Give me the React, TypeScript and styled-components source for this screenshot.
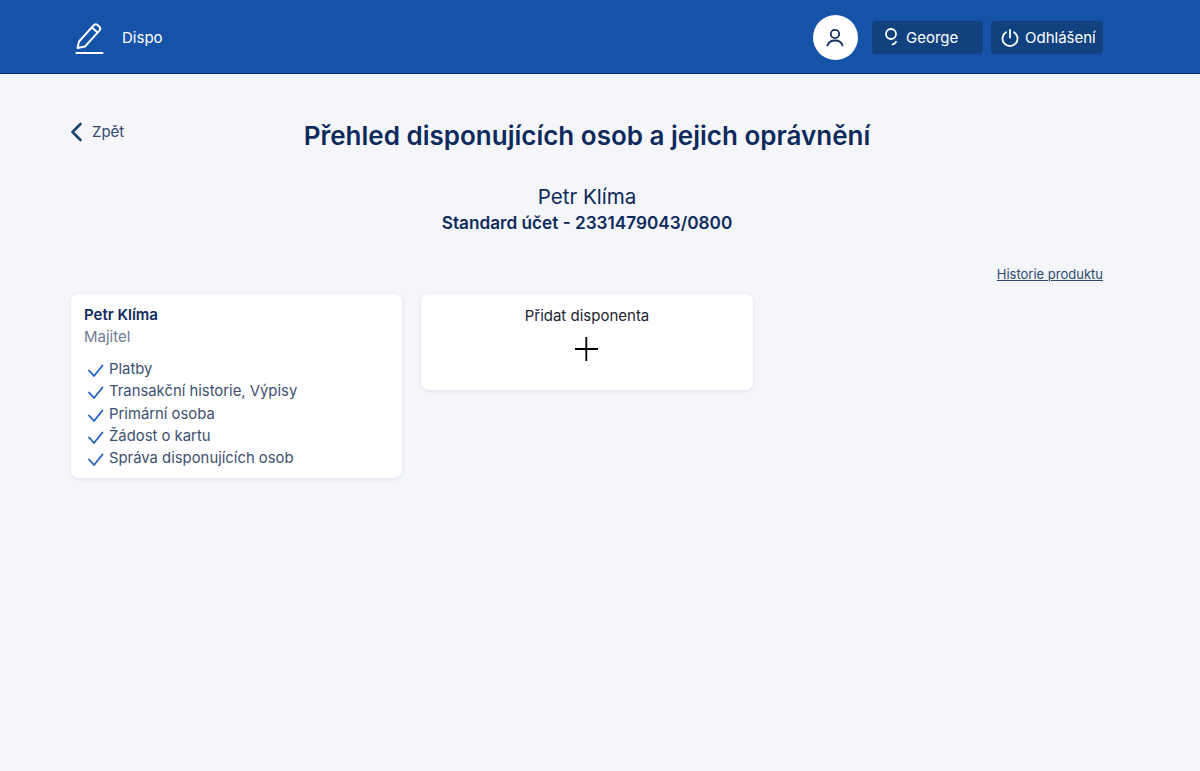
import React from "react";
import styled, { createGlobalStyle } from "styled-components";

const Global = createGlobalStyle`
  html, body { margin: 0; padding: 0; background: #f4f6fa; }
  body { font-family: Inter, "Liberation Sans", sans-serif; color: #0e2a5c; }
  * { box-sizing: border-box; }
`;

const Page = styled.div`
  min-height: 771px;
  background: #f4f6fa;
  display: flex;
  flex-direction: column;
`;

const Header = styled.header`
  height: 74px;
  background: #1553a8;
  border-bottom: 1px solid #0b2a63;
  display: flex;
  align-items: center;
  justify-content: space-between;
  padding: 2px 97px 0 74px;
`;

const Brand = styled.div`
  display: flex;
  align-items: center;
  gap: 15px;
  color: #fff;
  font-size: 15px;
`;

const HeaderActions = styled.div`
  display: flex;
  align-items: center;
  gap: 8px;
`;

const Avatar = styled.div`
  width: 45px;
  height: 45px;
  border-radius: 50%;
  background: #fff;
  display: flex;
  align-items: center;
  justify-content: center;
  margin-right: 6px;
`;

const HeaderButton = styled.div<{ $width: number; $gap: number; $pad: number }>`
  width: ${(p) => p.$width}px;
  height: 33px;
  padding-left: ${(p) => p.$pad}px;
  border-radius: 4px;
  background: #11427f;
  color: #fff;
  font-size: 15px;
  display: flex;
  align-items: center;
  gap: ${(p) => p.$gap}px;
`;

const Main = styled.main`
  padding: 0 97px 0 71px;
  display: flex;
  flex-direction: column;
`;

const TitleRow = styled.div`
  display: grid;
  grid-template-columns: 1fr auto 1fr;
  align-items: start;
  margin-top: 46px;
`;

const Back = styled.a`
  display: flex;
  align-items: center;
  gap: 8px;
  color: #33496f;
  font-size: 15px;
  padding-top: 1px;
  height: 22px;
`;

const Title = styled.h1`
  margin: 0;
  font-size: 26px;
  line-height: 32px;
  font-weight: 600;
  color: #0e2a5c;
`;

const Owner = styled.div`
  margin-top: 31px;
  text-align: center;
  font-size: 20.6px;
  line-height: 28px;
  color: #0e2a5c;
`;

const Account = styled.div`
  text-align: center;
  font-size: 17.2px;
  line-height: 24px;
  font-weight: 600;
  color: #0e2a5c;
`;

const HistoryRow = styled.div`
  display: flex;
  justify-content: flex-end;
  margin-top: 30px;
`;

const HistoryLink = styled.a`
  font-size: 13px;
  line-height: 18px;
  color: #2b4a72;
  text-decoration: underline;
`;

const Cards = styled.div`
  display: grid;
  grid-template-columns: repeat(3, 1fr);
  column-gap: 19px;
  align-items: start;
  margin-top: 11px;
`;

const Card = styled.section`
  background: #fff;
  border-radius: 8px;
  box-shadow: 0 1px 4px rgba(40, 60, 100, 0.1);
`;

const PersonCard = styled(Card)`
  height: 184px;
  padding: 11px 13px;
`;

const AddCard = styled(Card)`
  height: 96px;
  padding-top: 12px;
  display: flex;
  flex-direction: column;
  align-items: center;
  gap: 11px;
  color: #1b2432;
  font-size: 15px;
  line-height: 20px;
`;

const Name = styled.div`
  font-size: 15px;
  line-height: 20px;
  font-weight: 600;
  color: #0e2a5c;
`;

const Role = styled.div`
  margin-top: 2px;
  font-size: 15px;
  line-height: 20px;
  color: #6c7c96;
`;

const Perms = styled.ul`
  list-style: none;
  margin: 12px 0 0;
  padding: 0;
`;

const Perm = styled.li`
  display: flex;
  align-items: flex-start;
  gap: 4px;
  height: 22.3px;
  font-size: 14.85px;
  line-height: 20px;
  color: #3c4f70;
`;

const CheckIcon = styled.svg`
  flex: none;
  margin-top: 1px;
  width: 21px;
  height: 20px;
`;

const perms = ["Platby", "Transakční historie, Výpisy", "Primární osoba", "Žádost o kartu", "Správa disponujících osob"];

export default function App() {
  return (
    <Page>
      <Global />
      <Header>
        <Brand>
          <svg width="33" height="34" viewBox="0 0 33 34" fill="none" stroke="#fff" strokeWidth="1.9" strokeLinejoin="round" strokeLinecap="round">
            <path d="M3.5 27 L5 20.5 L19.5 4.5 a3 3 0 0 1 4.2 -0.3 l1.5 1.3 a3 3 0 0 1 0.2 4.2 L11 25.5 Z" />
            <path d="M18 6.5 L23.5 11.5" />
            <path d="M2.5 32 H28.5" strokeWidth="2.2" />
          </svg>
          <span>Dispo</span>
        </Brand>
        <HeaderActions>
          <Avatar>
            <svg width="22" height="22" viewBox="0 0 22 22" fill="none" stroke="#12305f" strokeWidth="1.8" strokeLinecap="round">
              <circle cx="10" cy="7" r="4.2" />
              <path d="M2.5 18.5 C3.5 15 6.5 13.5 10 13.5 C13.5 13.5 16.5 15 17.5 18.5" />
            </svg>
          </Avatar>
          <HeaderButton $width={111} $gap={7} $pad={13}>
            <svg width="14" height="20" viewBox="0 0 14 20" fill="none" stroke="#fff" strokeWidth="1.8" strokeLinecap="round">
              <circle cx="6" cy="6" r="5" />
              <path d="M7.5 16.5 C9 16 10.3 15 11 13.8" />
            </svg>
            <span>George</span>
          </HeaderButton>
          <HeaderButton $width={112} $gap={6} $pad={10}>
            <svg width="18" height="18" viewBox="0 0 18 18" fill="none" stroke="#fff" strokeWidth="1.8" strokeLinecap="round">
              <path d="M9 1 V8.5" />
              <path d="M5 3.2 A7.5 7.5 0 1 0 13 3.2" />
            </svg>
            <span>Odhlášení</span>
          </HeaderButton>
        </HeaderActions>
      </Header>
      <Main>
        <TitleRow>
          <Back>
            <svg width="13" height="20" viewBox="0 0 13 20" fill="none" stroke="#1f4470" strokeWidth="2.6" strokeLinecap="round" strokeLinejoin="round">
              <path d="M9.5 2 L1.5 10 L9.5 18" />
            </svg>
            <span>Zpět</span>
          </Back>
          <Title>Přehled disponujících osob a jejich oprávnění</Title>
          <div />
        </TitleRow>
        <Owner>Petr Klíma</Owner>
        <Account>Standard účet - 2331479043/0800</Account>
        <HistoryRow>
          <HistoryLink>Historie produktu</HistoryLink>
        </HistoryRow>
        <Cards>
          <PersonCard>
            <Name>Petr Klíma</Name>
            <Role>Majitel</Role>
            <Perms>
              {perms.map((p) => (
                <Perm key={p}>
                  <CheckIcon viewBox="0 0 21 20" fill="none" stroke="#1f62c0" strokeWidth="1.8" strokeLinecap="round" strokeLinejoin="round">
                    <path d="M5 10.5 L10 16 L18.5 5.5" />
                  </CheckIcon>
                  <span>{p}</span>
                </Perm>
              ))}
            </Perms>
          </PersonCard>
          <AddCard>
            <span>Přidat disponenta</span>
            <svg width="24" height="24" viewBox="0 0 24 24" fill="none" stroke="#000" strokeWidth="1.8">
              <path d="M11.3 0 V24 M-1 12 H23" />
            </svg>
          </AddCard>
        </Cards>
      </Main>
    </Page>
  );
}
